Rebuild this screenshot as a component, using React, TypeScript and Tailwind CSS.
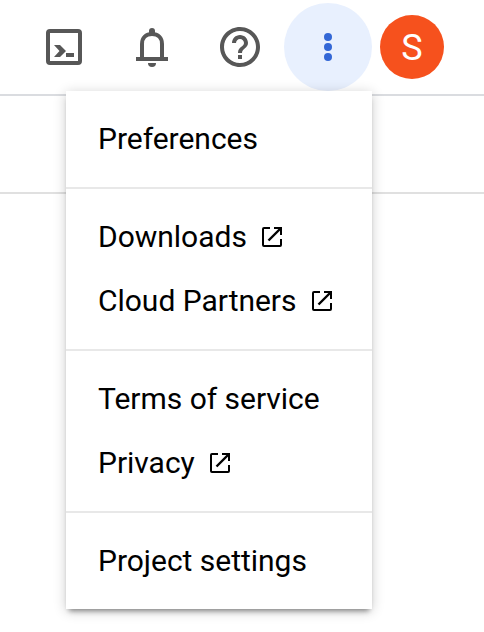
import React from "react";

function OpenInNew() {
  return (
    <svg viewBox="0 0 20 20" className="ml-[15.3px] size-5 shrink-0" fill="none" stroke="#000" strokeWidth="2">
      <path d="M8 1H2Q1 1 1 2V18Q1 19 2 19H18Q19 19 19 18V12" />
      <path d="M12 1H19V8" />
      <path d="M19 1L6.5 13.5" strokeWidth="2.4" />
    </svg>
  );
}

function Item({ label, external }: { label: string; external?: boolean }) {
  return (
    <li className="flex h-16 items-center px-8 text-[30px] leading-10 tracking-[-0.02px] whitespace-nowrap text-black">
      <span>{label}</span>
      {external && <OpenInNew />}
    </li>
  );
}

function Group({ children }: { children: React.ReactNode }) {
  return <ul className="border-b-2 border-[#e8e8e8] py-4 last:border-b-0">{children}</ul>;
}

export default function App() {
  return (
    <div className="relative h-[632px] w-[484px] overflow-hidden bg-white font-[Roboto,sans-serif]">
      <header className="flex h-24 border-b-2 border-[#dadce0] pl-10">
        <div className="flex h-[94px] items-center gap-10">
          <svg viewBox="0 0 48 48" className="size-12" fill="#575757">
            <rect x="8" y="8" width="32" height="32" rx="2" fill="none" stroke="#575757" strokeWidth="4" />
            <path d="M14 22H20L26 28L20 34H14L19.5 28Z" />
            <path d="M26 30H34V34H26Z" />
          </svg>
          <svg viewBox="0 0 48 48" className="size-12" fill="#575757">
            <path d="M14 36V21C14 15 18 11 24 11S34 15 34 21V36" fill="none" stroke="#575757" strokeWidth="4" />
            <path d="M21 11V8A3 3 0 0 1 27 8V11Z" />
            <path d="M8 34H40V38H8Z" />
            <path d="M20 40H28A4 4 0 0 1 20 40Z" />
          </svg>
          <svg viewBox="0 0 24 24" className="size-12" fill="#575757">
            <path d="M11 18h2v-2h-2v2zm1-16C6.48 2 2 6.48 2 12s4.48 10 10 10 10-4.48 10-10S17.52 2 12 2zm0 18c-4.41 0-8-3.59-8-8s3.59-8 8-8 8 3.59 8 8-3.59 8-8 8zm0-14c-2.21 0-4 1.79-4 4h2c0-1.1.9-2 2-2s2 .9 2 2c0 2-3 1.75-3 5h2c0-2.25 3-2.5 3-5 0-2.21-1.79-4-4-4z" />
          </svg>
        </div>
        <div className="ml-5 flex h-[94px] items-center gap-2">
          <div className="flex size-[88px] items-center justify-center rounded-full bg-[#e8f0fe]">
            <svg viewBox="0 0 8 28" className="h-7 w-2" fill="#3367d6">
              <circle cx="4" cy="4" r="4" />
              <circle cx="4" cy="14" r="4" />
              <circle cx="4" cy="24" r="4" />
            </svg>
          </div>
          <div className="flex size-16 items-center justify-center rounded-full bg-[#f6511d] pt-0.5 text-[36px] leading-none text-white">
            S
          </div>
        </div>
      </header>
      <div className="h-[98px] border-b-2 border-[#e0e0e0]" />
      <nav className="absolute top-[91px] left-[66px] w-[306px] bg-white shadow-[0_5px_5px_-3px_rgba(0,0,0,0.4),0_2px_12px_rgba(0,0,0,0.2)]">
        <Group>
          <Item label="Preferences" />
        </Group>
        <Group>
          <Item label="Downloads" external />
          <Item label="Cloud Partners" external />
        </Group>
        <Group>
          <Item label="Terms of service" />
          <Item label="Privacy" external />
        </Group>
        <Group>
          <Item label="Project settings" />
        </Group>
      </nav>
    </div>
  );
}
